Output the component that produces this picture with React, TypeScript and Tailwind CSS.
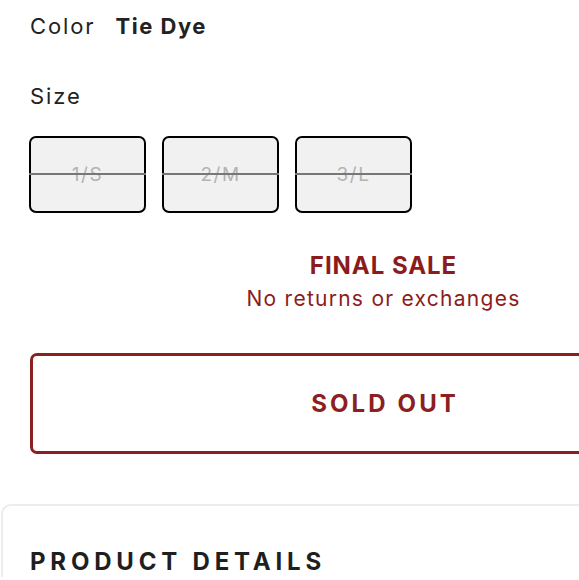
import React from "react";

const sizes = ["1/S", "2/M", "3/L"];

export default function App() {
  return (
    <div className="w-[579px] h-[580px] overflow-hidden bg-white" style={{ fontFamily: "Inter, 'Noto Sans', sans-serif" }}>
      <div className="w-[737px] pl-[30px] pt-[12px]">
        <div className="flex items-baseline gap-[20px] text-[22px] leading-[28px] text-[#222]">
          <span className="tracking-[0.085em]">Color</span>
          <span className="font-bold tracking-[0.07em]">Tie Dye</span>
        </div>
        <div className="mt-[42px] text-[22px] leading-[28px] text-[#222] tracking-[0.085em]">Size</div>
        <div className="ml-[-1px] mt-[26px] flex gap-[16px]">
          {sizes.map((s) => (
            <div
              key={s}
              className="relative flex h-[77px] w-[117px] items-center justify-center rounded-[7px] border-2 border-black bg-[#f1f1f1] text-[19px] tracking-[0.08em] text-[#b3b3b3]"
            >
              <span className="mt-[1px]">{s}</span>
              <div className="absolute left-[-2px] right-[-2px] top-[35px] h-[2px] bg-[#777]" />
            </div>
          ))}
        </div>
        <div className="mt-[38px] flex flex-col items-center text-[#8c1b1b]">
          <div className="text-[24px] font-bold leading-[30px] tracking-[0.04em]">FINAL SALE</div>
          <div className="mt-[4px] text-[21px] leading-[28px] tracking-[0.06em]">No returns or exchanges</div>
        </div>
        <div className="mt-[40px] flex h-[101px] items-center justify-center rounded-[7px] border-[3px] border-[#8b2020] text-[24px] font-bold tracking-[0.13em] text-[#8b2020]">
          <span className="ml-[0.13em]">SOLD OUT</span>
        </div>
      </div>
      <div className="ml-[1px] mt-[50px] w-[800px] rounded-tl-[10px] border-l-[2px] border-t-[2px] border-[#ececec] pl-[27px] pt-[41px]">
        <div className="text-[24px] font-bold leading-[30px] tracking-[0.2em] text-[#1f1f1f]">PRODUCT DETAILS</div>
      </div>
    </div>
  );
}
